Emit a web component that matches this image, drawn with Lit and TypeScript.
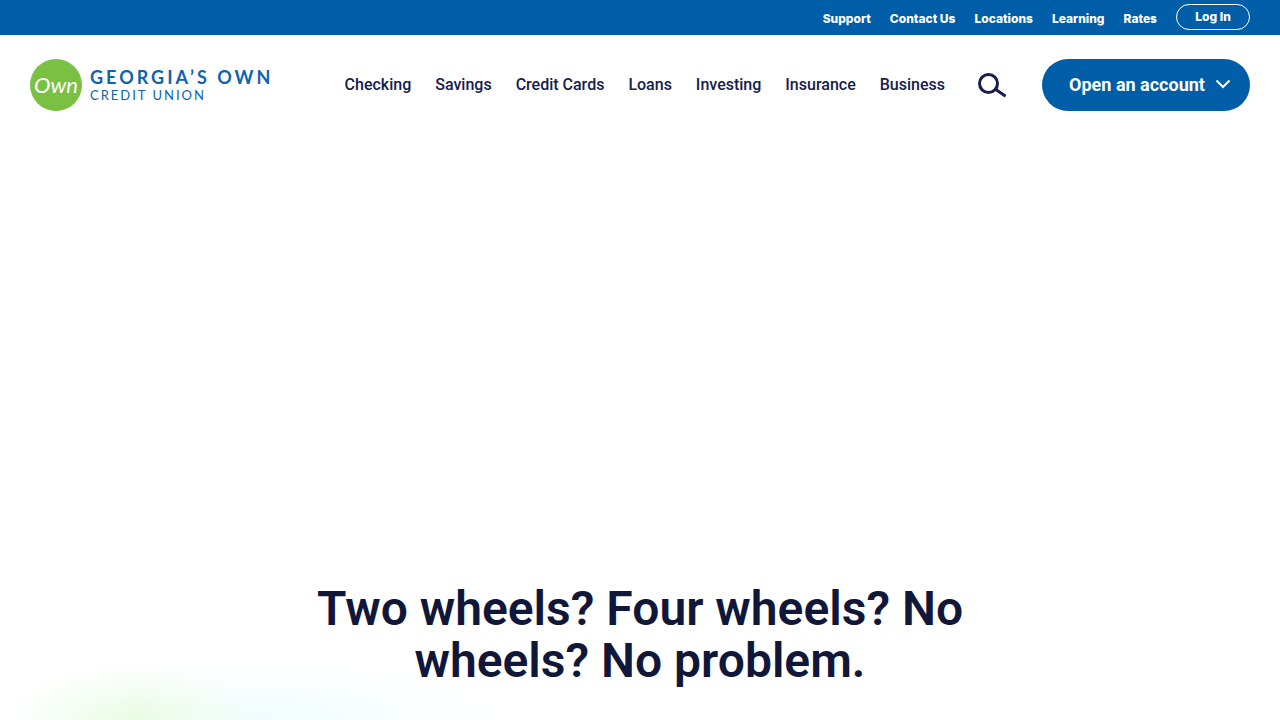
import { LitElement, html, css } from "lit";
import { customElement } from "lit/decorators.js";

const utilityLinks = ["Support", "Contact Us", "Locations", "Learning", "Rates"];
const mainLinks = ["Checking", "Savings", "Credit Cards", "Loans", "Investing", "Insurance", "Business"];

@customElement("app-root")
export class AppRoot extends LitElement {
  static styles = css`
    :host {
      display: block;
      min-height: 100vh;
      overflow: hidden;
      box-sizing: border-box;
      background: #fff;
      color: #15204b;
      font-family: Roboto, "Liberation Sans", sans-serif;
    }
    a {
      color: inherit;
      text-decoration: none;
    }
    button {
      font-family: inherit;
      cursor: pointer;
      margin: 0;
    }
    .utility {
      display: flex;
      justify-content: flex-end;
      align-items: flex-start;
      gap: 19px;
      height: 35px;
      box-sizing: border-box;
      padding: 4px 30px 0;
      background: #005da8;
      color: #fff;
      font: 800 12px/30px Inter, sans-serif;
    }
    .login {
      width: 74px;
      height: 26px;
      box-sizing: border-box;
      border: 1px solid #fff;
      border-radius: 13px;
      line-height: 24px;
      text-align: center;
    }
    .header {
      display: flex;
      align-items: center;
      padding: 24px 30px;
    }
    .logo {
      display: flex;
      align-items: center;
      gap: 8px;
      color: #0d63ac;
      white-space: nowrap;
    }
    .badge {
      display: grid;
      place-items: center;
      width: 52px;
      height: 52px;
      border-radius: 50%;
      background: #7ac143;
      color: #fff;
      font: italic 400 22px/50px Lato, sans-serif;
    }
    .wordmark {
      display: grid;
      text-transform: uppercase;
    }
    .name {
      font: 700 18px/20px Lato, sans-serif;
      letter-spacing: 3px;
    }
    .kind {
      font: 400 13px/16px Lato, sans-serif;
      letter-spacing: 2px;
    }
    .nav {
      display: flex;
      gap: 24px;
      margin-left: auto;
      font-size: 16px;
      font-weight: 500;
      line-height: 20px;
      white-space: nowrap;
    }
    .search {
      display: flex;
      margin-left: 32px;
      padding: 0;
      border: 0;
      background: none;
      color: inherit;
    }
    .open {
      display: flex;
      align-items: center;
      justify-content: center;
      gap: 10px;
      width: 208px;
      height: 52px;
      margin-left: 35px;
      padding: 0 0 2px 8px;
      border: 0;
      border-radius: 26px;
      background: #005da8;
      color: #fff;
      font-size: 18px;
      font-weight: 700;
      white-space: nowrap;
    }
    .hero {
      padding-top: 448px;
      min-height: 137px;
      background:
        radial-gradient(ellipse 130px 56px at 135px 100%, #e9fce1, #e9fce166 50%, transparent),
        radial-gradient(ellipse 260px 60px at 260px 100%, #effcff, #effcff66 50%, transparent);
    }
    .title {
      max-width: 680px;
      margin: 0 auto;
      color: #111739;
      font-size: 48px;
      font-weight: 600;
      line-height: 52px;
      text-align: center;
    }
  `;

  render() {
    return html`
      <nav class="utility" aria-label="Utility">
        ${utilityLinks.map((label) => html`<a href="#">${label}</a>`)}
        <a class="login" href="#">Log In</a>
      </nav>
      <header class="header">
        <a class="logo" href="#">
          <span class="badge">Own</span>
          <span class="wordmark">
            <span class="name">Georgia’s Own</span>
            <span class="kind">Credit Union</span>
          </span>
        </a>
        <nav class="nav" aria-label="Main">
          ${mainLinks.map((label) => html`<a href="#">${label}</a>`)}
        </nav>
        <button class="search" aria-label="Search">
          <svg width="30" height="26" viewBox="0 0 30 26" fill="none" stroke="currentColor" stroke-width="3">
            <circle cx="11.5" cy="11.5" r="9" />
            <path d="M18.5 17.2 28.6 24.2" />
          </svg>
        </button>
        <button class="open">
          Open an account
          <svg width="16" height="10" viewBox="0 0 16 10" fill="none" stroke="currentColor" stroke-width="2">
            <path d="m1.5 1.5 6.5 6.5 6.5-6.5" />
          </svg>
        </button>
      </header>
      <main class="hero">
        <h1 class="title">Two wheels? Four wheels? No wheels? No problem.</h1>
      </main>
    `;
  }
}
